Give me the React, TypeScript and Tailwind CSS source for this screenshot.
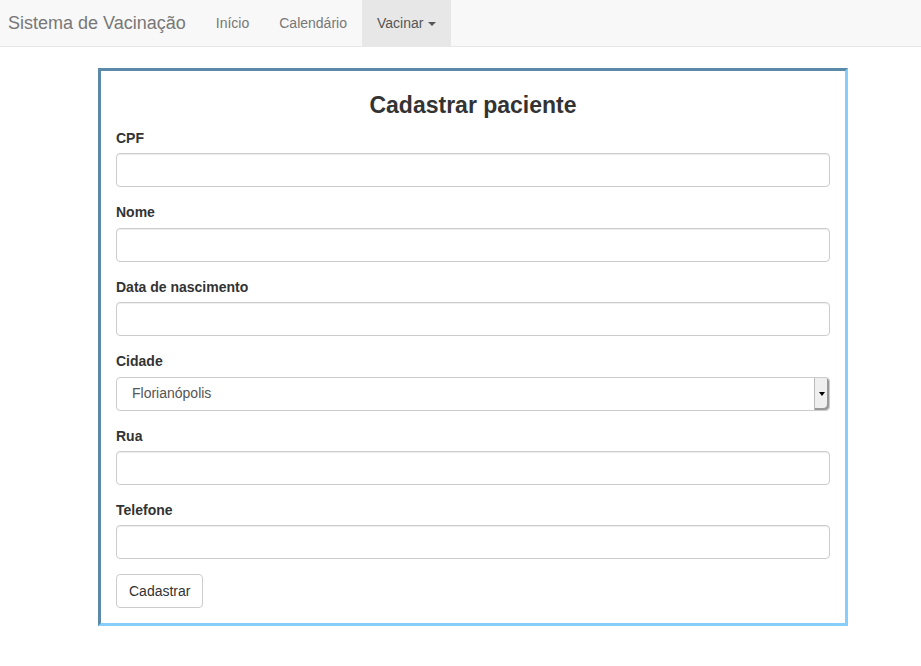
export default function App() {
  const fields = ["CPF", "Nome", "Data de nascimento"];
  const font = { fontFamily: '"Liberation Sans", Arial, sans-serif' };

  return (
    <div className="min-h-screen bg-white text-[14px] text-[#333]" style={font}>
      <nav className="flex h-[47px] items-stretch border-b border-[#e7e7e7] bg-[#f8f8f8]">
        <a className="flex items-center pl-2 pr-[15px] text-[18px] text-[#777]">Sistema de Vacinação</a>
        <a className="flex items-center px-[15px] text-[#777]">Início</a>
        <a className="flex items-center px-[15px] text-[#777]">Calendário</a>
        <a className="flex items-center gap-[5px] bg-[#e7e7e7] px-[15px] text-[#555]">
          Vacinar
          <span className="mt-[2px] h-0 w-0 border-x-4 border-t-4 border-x-transparent border-t-[#555]" />
        </a>
      </nav>

      <main className="ml-[98px] mt-[21px] w-[750px] border-[3px] border-b-[#87cefa] border-l-[#5a8aa8] border-r-[#87cefa] border-t-[#5a8aa8] px-[15px] pb-[15px]">
        <h3 className="mb-[10px] mt-[21px] text-center text-[23px] font-bold leading-[26px] text-[#333]">Cadastrar paciente</h3>

        {fields.map((f) => (
          <div key={f} className="mb-[15px]">
            <label className="mb-[5px] block font-bold leading-[20.4px]">{f}</label>
            <div className="h-[34px] rounded border border-[#ccc] bg-white shadow-[inset_0_1px_1px_rgba(0,0,0,0.075)]" />
          </div>
        ))}

        <div className="mb-[15px]">
          <label className="mb-[5px] block font-bold leading-[20.4px]">Cidade</label>
          <div className="flex h-[34px] items-stretch rounded border border-[#ccc] bg-white">
            <span className="flex flex-1 items-center pl-[15px] text-[#555]">Florianópolis</span>
            <span className="flex w-[15px] items-center justify-center rounded-r border-l border-[#bbb] bg-[#efefef] shadow-[inset_-2px_-2px_0_#999]">
              <span className="h-0 w-0 border-x-[3px] border-t-[4px] border-x-transparent border-t-black" />
            </span>
          </div>
        </div>

        {["Rua", "Telefone"].map((f) => (
          <div key={f} className="mb-[15px]">
            <label className="mb-[5px] block font-bold leading-[20.4px]">{f}</label>
            <div className="h-[34px] rounded border border-[#ccc] bg-white shadow-[inset_0_1px_1px_rgba(0,0,0,0.075)]" />
          </div>
        ))}

        <button className="h-[34px] rounded border border-[#ccc] bg-white px-3 leading-[20px] text-[#333]">Cadastrar</button>
      </main>
    </div>
  );
}
